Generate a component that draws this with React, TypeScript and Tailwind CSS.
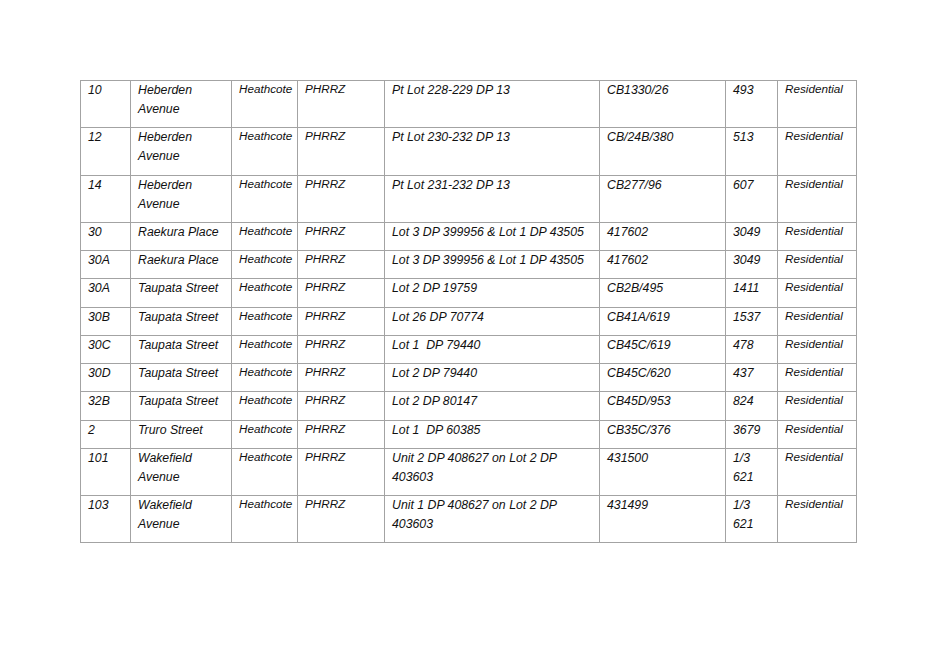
const rows: string[][] = [
  ['10', 'Heberden Avenue', 'Heathcote', 'PHRRZ', 'Pt Lot 228-229 DP 13', 'CB1330/26', '493', 'Residential'],
  ['12', 'Heberden Avenue', 'Heathcote', 'PHRRZ', 'Pt Lot 230-232 DP 13', 'CB/24B/380', '513', 'Residential'],
  ['14', 'Heberden Avenue', 'Heathcote', 'PHRRZ', 'Pt Lot 231-232 DP 13', 'CB277/96', '607', 'Residential'],
  ['30', 'Raekura Place', 'Heathcote', 'PHRRZ', 'Lot 3 DP 399956 & Lot 1 DP 43505', '417602', '3049', 'Residential'],
  ['30A', 'Raekura Place', 'Heathcote', 'PHRRZ', 'Lot 3 DP 399956 & Lot 1 DP 43505', '417602', '3049', 'Residential'],
  ['30A', 'Taupata Street', 'Heathcote', 'PHRRZ', 'Lot 2 DP 19759', 'CB2B/495', '1411', 'Residential'],
  ['30B', 'Taupata Street', 'Heathcote', 'PHRRZ', 'Lot 26 DP 70774', 'CB41A/619', '1537', 'Residential'],
  ['30C', 'Taupata Street', 'Heathcote', 'PHRRZ', 'Lot 1  DP 79440', 'CB45C/619', '478', 'Residential'],
  ['30D', 'Taupata Street', 'Heathcote', 'PHRRZ', 'Lot 2 DP 79440', 'CB45C/620', '437', 'Residential'],
  ['32B', 'Taupata Street', 'Heathcote', 'PHRRZ', 'Lot 2 DP 80147', 'CB45D/953', '824', 'Residential'],
  ['2', 'Truro Street', 'Heathcote', 'PHRRZ', 'Lot 1  DP 60385', 'CB35C/376', '3679', 'Residential'],
  ['101', 'Wakefield Avenue', 'Heathcote', 'PHRRZ', 'Unit 2 DP 408627 on Lot 2 DP 403603', '431500', '1/3 621', 'Residential'],
  ['103', 'Wakefield Avenue', 'Heathcote', 'PHRRZ', 'Unit 1 DP 408627 on Lot 2 DP 403603', '431499', '1/3 621', 'Residential'],
]

const widths = ['w-[50px]', 'w-[101px]', 'w-[66px]', 'w-[87px]', 'w-[215px]', 'w-[126px]', 'w-[52px]', 'w-[79px]']
const small = [false, false, true, true, false, false, false, true]

export default function App() {
  return (
    <div className="w-[934px] h-[661px] bg-white pt-[80px] pl-[80px] font-['Liberation_Sans',Arial,sans-serif] italic text-[#111]">
      <table className="border-collapse table-fixed w-[776px]">
        <colgroup>
          {widths.map((w, i) => (
            <col key={i} className={w} />
          ))}
        </colgroup>
        <tbody>
          {rows.map((r, i) => (
            <tr key={i}>
              {r.map((c, j) => (
                <td
                  key={j}
                  className={`border border-[#a3a3a3] align-top pl-[7px] pr-[4px] pt-0 pb-[8.25px] whitespace-pre-wrap ${
                    small[j] ? 'text-[11.7px] leading-[16px]' : 'text-[12.3px] leading-[19px]'
                  }`}
                >
                  {c}
                </td>
              ))}
            </tr>
          ))}
        </tbody>
      </table>
    </div>
  )
}
